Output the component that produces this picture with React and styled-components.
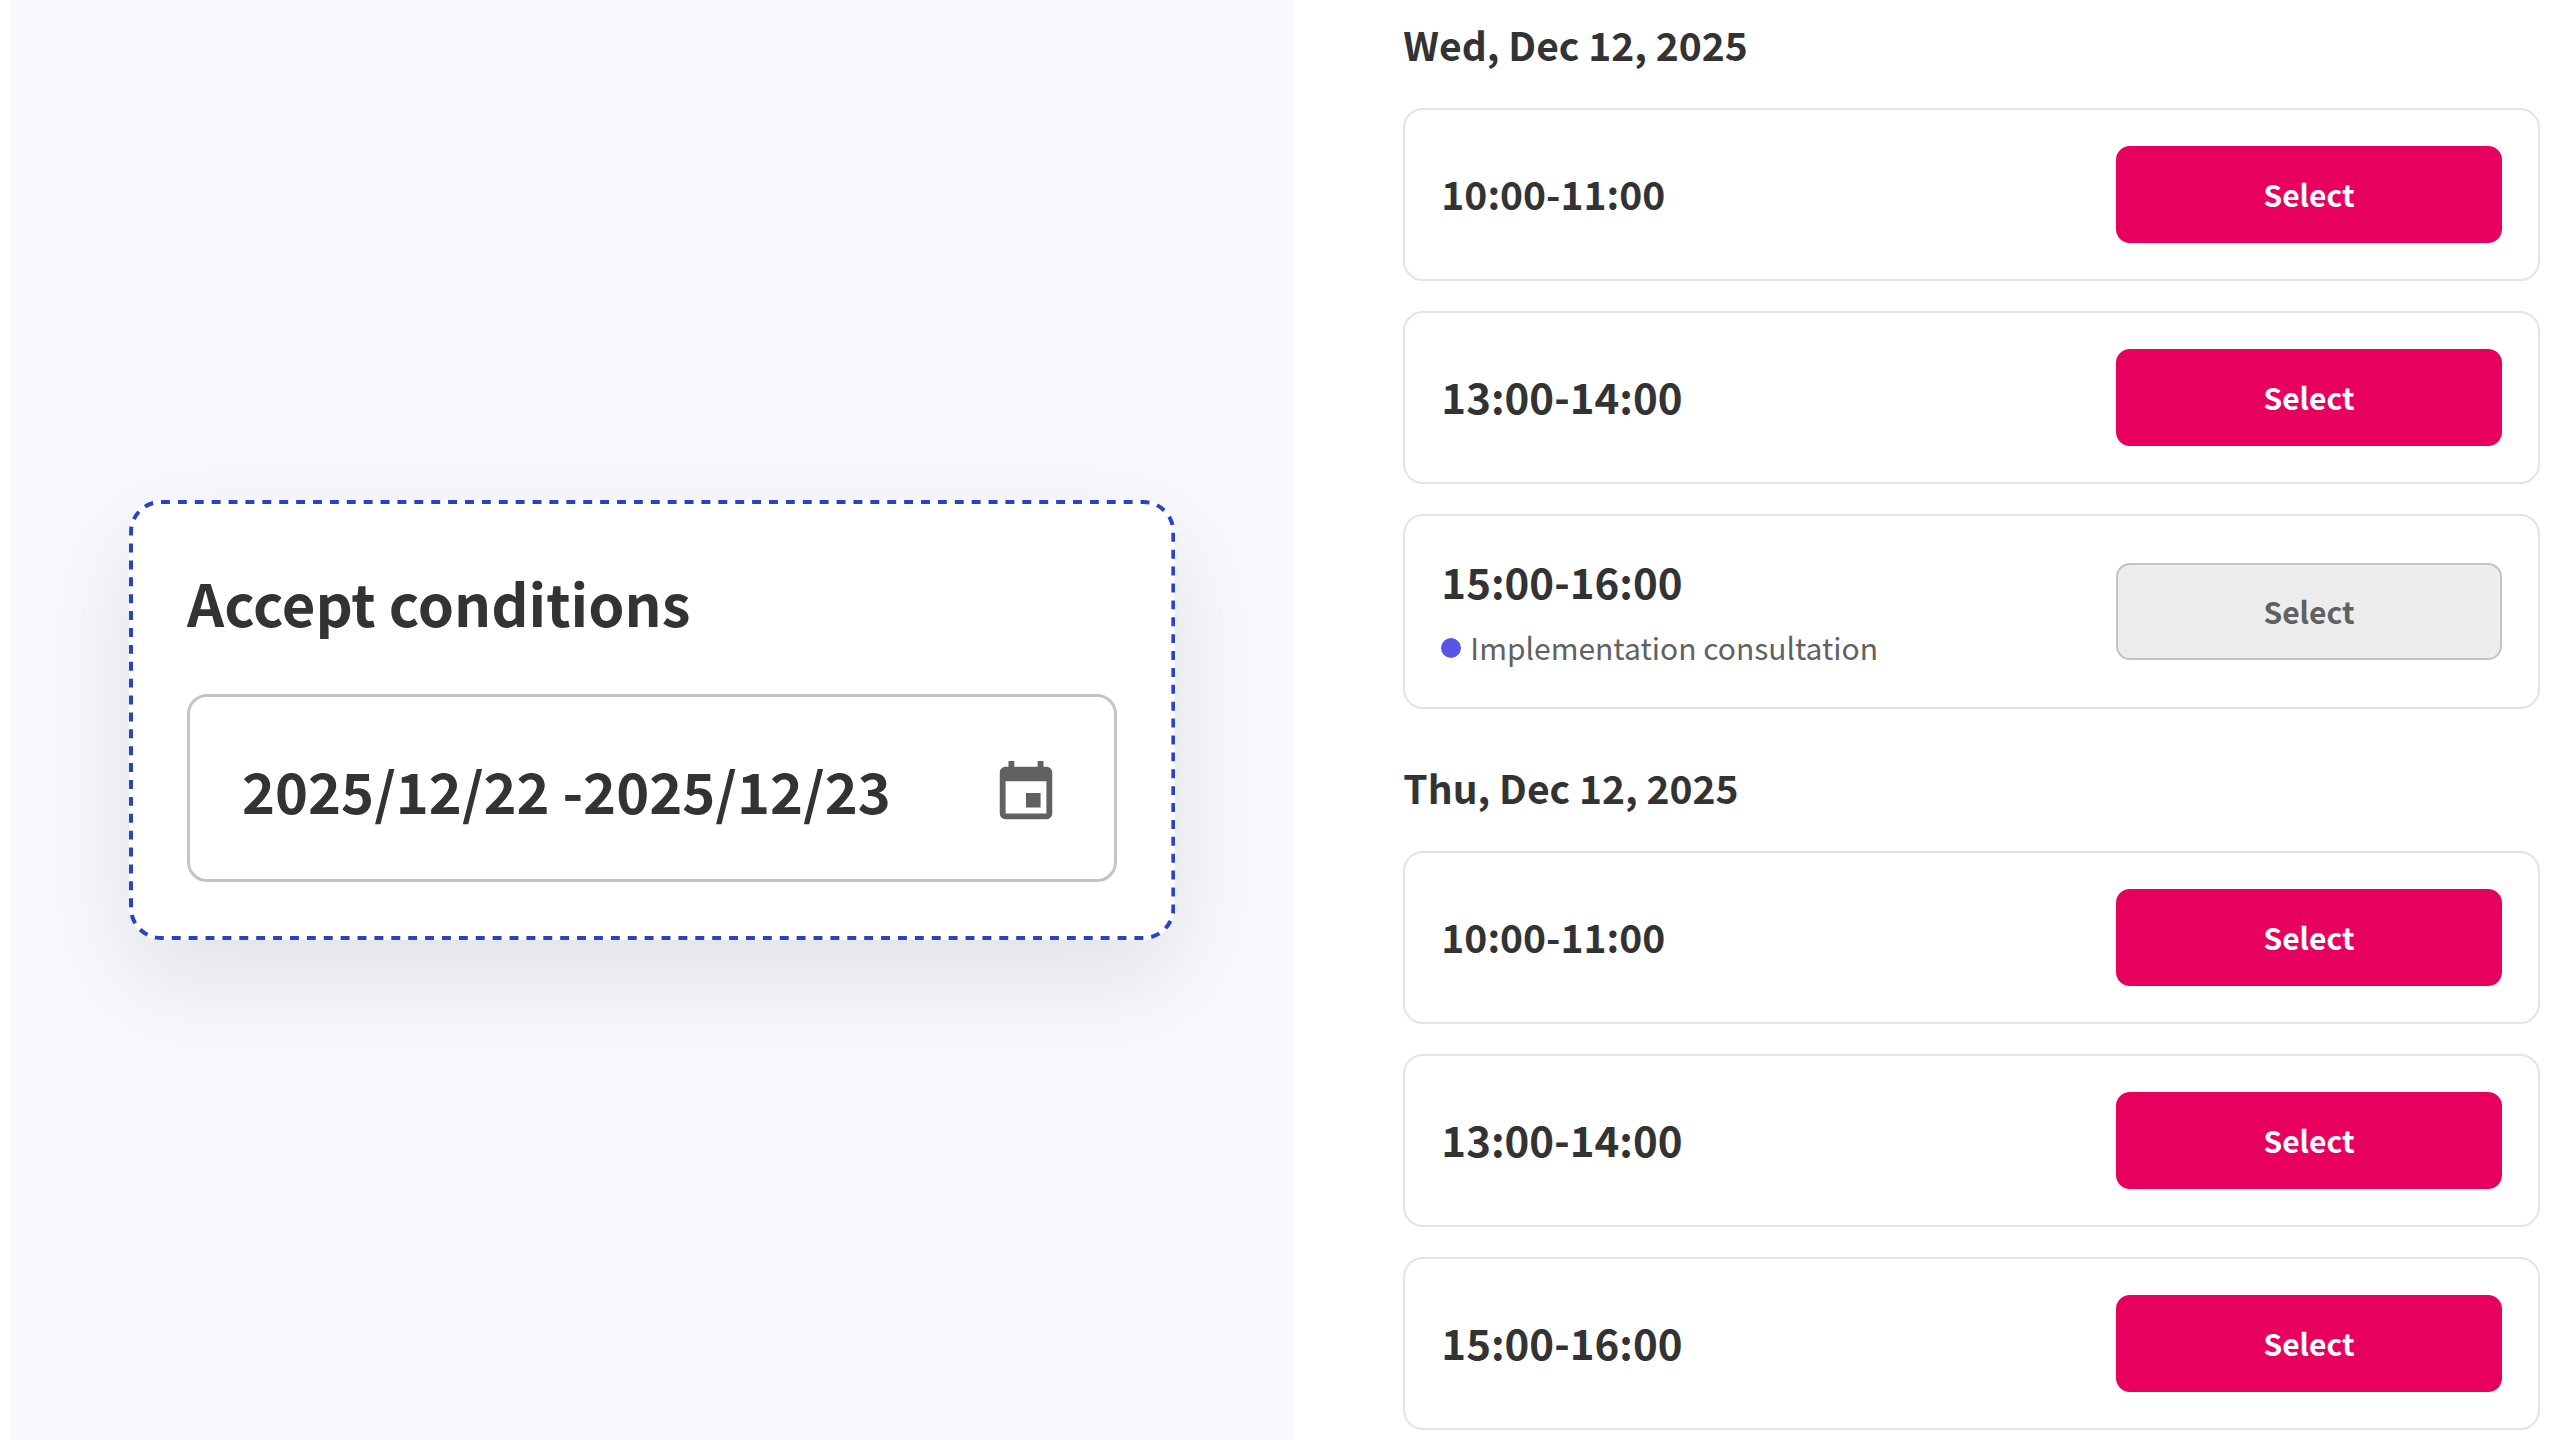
import React, { useState } from "react";
import styled, { createGlobalStyle } from "styled-components";
import { MdEvent } from "react-icons/md";

const GlobalStyle = createGlobalStyle`
  * {
    box-sizing: border-box;
  }

  body {
    margin: 0;
    background-color: #ffffff;
    color: #333333;
    font-family: "Noto Sans CJK JP", "Noto Sans", sans-serif;
  }

  button,
  input {
    font-family: inherit;
  }
`;

const Page = styled.div`
  display: grid;
  grid-template-columns: 101fr 100fr;
  grid-template-rows: 100vh;
  padding-left: 9px;
  overflow: hidden;
`;

const Side = styled.aside`
  display: flex;
  align-items: center;
  min-width: 0;
  padding: 0 120px;
  background-color: #f8f9fd;
  overflow: hidden;
`;

const Card = styled.section`
  position: relative;
  flex: 1;
  min-width: 0;
  padding: 58px;
  border-radius: 32px;
  background-color: #ffffff;
  box-shadow: 0 38px 100px rgba(20, 20, 0, 0.1);
`;

const Outline = styled.svg`
  position: absolute;
  inset: 0;
  width: 100%;
  height: 100%;
  pointer-events: none;

  rect {
    width: calc(100% - 4px);
    height: calc(100% - 4px);
    fill: none;
    stroke: #2843c4;
    stroke-width: 4px;
  }
`;

const CardTitle = styled.label`
  display: block;
  margin-bottom: 48px;
  font-size: 58px;
  font-weight: 700;
  line-height: 88px;
`;

const Field = styled.div`
  display: flex;
  align-items: center;
  padding: 56px 53px 46px 52px;
  border: 3px solid #c4c4c4;
  border-radius: 20px;
`;

const DateInput = styled.input`
  flex: 1;
  min-width: 0;
  height: 80px;
  padding: 0 0 8px;
  border: 0;
  outline: 0;
  background: transparent;
  color: #333333;
  font-size: 56px;
  font-weight: 700;
`;

const IconButton = styled.button`
  display: flex;
  padding: 0;
  border: 0;
  background: transparent;
  color: #616161;
  font-size: 70px;
  cursor: pointer;
`;

const Schedule = styled.main`
  padding: 14px 29px 0 108px;
`;

const Day = styled.section`
  margin-bottom: 48px;
`;

const DayTitle = styled.h2`
  margin: 0 0 34px;
  font-size: 39px;
  font-weight: 700;
  line-height: 60px;
`;

const Slots = styled.ul`
  display: flex;
  flex-direction: column;
  gap: 30px;
  margin: 0;
  padding: 0;
  list-style: none;
`;

const Slot = styled.li`
  display: flex;
  align-items: center;
  justify-content: space-between;
  min-height: 173px;
  padding: 35px 36px;
  border: 2px solid #e4e4e4;
  border-radius: 20px;
`;

const Time = styled.div`
  padding-bottom: 4px;
  font-size: ${({ $small }) => ($small ? "39px" : "42px")};
  font-weight: 700;
  line-height: 60px;
`;

const Note = styled.div`
  display: flex;
  align-items: center;
  gap: 9px;
  margin-top: 8px;
  color: #616161;
  font-size: 30px;
  line-height: 49px;
`;

const Dot = styled.span`
  width: 20px;
  height: 20px;
  border-radius: 50%;
  background-color: #5757e3;
`;

const SelectButton = styled.button`
  width: 386px;
  height: 97px;
  padding: 0 0 2px;
  border: 2px solid #e8005f;
  border-radius: 14px;
  background-color: #e8005f;
  color: #ffffff;
  font-size: 30px;
  font-weight: 700;
  cursor: pointer;

  &:disabled {
    border-color: #c4c4c4;
    background-color: #ededed;
    color: #616161;
    cursor: default;
  }
`;

const days = [
  {
    title: "Wed, Dec 12, 2025",
    slots: [
      { time: "10:00-11:00", small: true },
      { time: "13:00-14:00" },
      { time: "15:00-16:00", note: "Implementation consultation" },
    ],
  },
  {
    title: "Thu, Dec 12, 2025",
    slots: [
      { time: "10:00-11:00", small: true },
      { time: "13:00-14:00" },
      { time: "15:00-16:00" },
    ],
  },
];

const Conditions = () => {
  const [range, setRange] = useState("2025/12/22 -2025/12/23");

  return (
    <Card>
      {/* dashes are spread evenly round the whole outline */}
      <Outline aria-hidden="true">
        <rect x="2" y="2" rx="30" pathLength="2924" strokeDasharray="9 8" />
      </Outline>
      <CardTitle htmlFor="range">Accept conditions</CardTitle>
      <Field>
        <DateInput
          id="range"
          value={range}
          onChange={(e) => setRange(e.target.value)}
        />
        <IconButton type="button" aria-label="Open calendar">
          <MdEvent />
        </IconButton>
      </Field>
    </Card>
  );
};

const App = () => {
  return (
    <>
      <GlobalStyle />
      <Page>
        <Side>
          <Conditions />
        </Side>
        <Schedule>
          {days.map((day) => (
            <Day key={day.title}>
              <DayTitle>{day.title}</DayTitle>
              <Slots>
                {day.slots.map((slot) => (
                  <Slot key={slot.time}>
                    <div>
                      <Time $small={slot.small}>{slot.time}</Time>
                      {slot.note && (
                        <Note>
                          <Dot />
                          {slot.note}
                        </Note>
                      )}
                    </div>
                    <SelectButton type="button" disabled={Boolean(slot.note)}>
                      Select
                    </SelectButton>
                  </Slot>
                ))}
              </Slots>
            </Day>
          ))}
        </Schedule>
      </Page>
    </>
  );
};

export default App;
